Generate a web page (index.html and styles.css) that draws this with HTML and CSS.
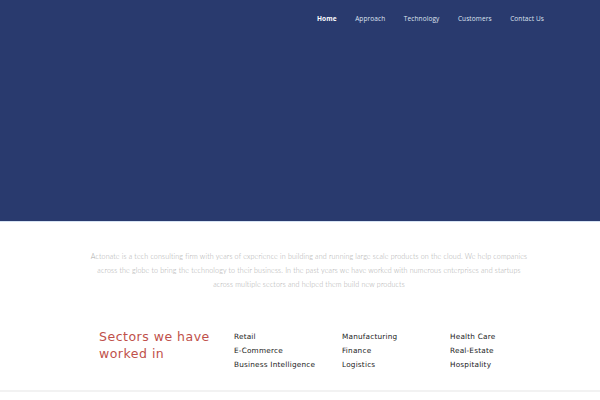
FILE: index.html
```html
<!DOCTYPE html>
<html>
<head>
<meta charset="utf-8">
<link rel="stylesheet" href="styles.css">
</head>
<body>
<header class="hero">
  <nav class="nav">
    <a class="nav-item active">Home</a>
    <a class="nav-item">Approach</a>
    <a class="nav-item">Technology</a>
    <a class="nav-item">Customers</a>
    <a class="nav-item">Contact Us</a>
  </nav>
</header>
<section class="intro">
  <p>Actonate is a tech consulting firm with years of experience in building and running large scale products on the cloud. We help companies<br>across the globe to bring the technology to their business. In the past years we have worked with numerous enterprises and startups<br>across multiple sectors and helped them build new products</p>
</section>
<section class="sectors">
  <h2 class="sectors-title">Sectors we have worked in</h2>
  <ul class="sector-col">
    <li>Retail</li><li>E-Commerce</li><li>Business Intelligence</li>
  </ul>
  <ul class="sector-col">
    <li>Manufacturing</li><li>Finance</li><li>Logistics</li>
  </ul>
  <ul class="sector-col">
    <li>Health Care</li><li>Real-Estate</li><li>Hospitality</li>
  </ul>
</section>
<div class="divider"></div>
</body>
</html>
```
FILE: styles.css
```css
html, body { margin: 0; padding: 0; background: #fff; }
body { font-family: "DejaVu Sans", Verdana, sans-serif; width: 600px; overflow: hidden; }
.hero { height: 222px; background: #293a6e; border-bottom: 1px solid #d6e3f3; box-sizing: border-box; }
.nav { display: flex; justify-content: flex-end; gap: 18.5px; padding: 14px 56px 0 0; }
.nav-item { font-family: "Open Sans", sans-serif; font-size: 6.5px; color: #dfe4f0; line-height: 9px; letter-spacing: 0.1px; }
.nav-item.active { color: #fff; font-weight: 700; }
.intro { display: flex; justify-content: center; padding: 28px 0 0 18px; }
.intro p { margin: 0; width: 500px; text-align: center; font-family: "Lato", sans-serif; font-weight: 300; font-size: 7.1px; line-height: 14px; color: #ababab; letter-spacing: 0.15px; }
.sectors { display: flex; padding: 36px 0 0 99px; height: 62px; }
.sectors-title { margin: 0; width: 135px; font-weight: 400; font-size: 12.5px; line-height: 17px; color: #c0504a; letter-spacing: 0.5px; }
.sector-col { list-style: none; margin: 1.5px 0 0 0; padding: 0; width: 108px; }
.sector-col li { font-size: 7.3px; line-height: 14px; color: #222; font-weight: 500; letter-spacing: 0.2px; }
.divider { height: 2px; background: #f2f2f2; }
```
